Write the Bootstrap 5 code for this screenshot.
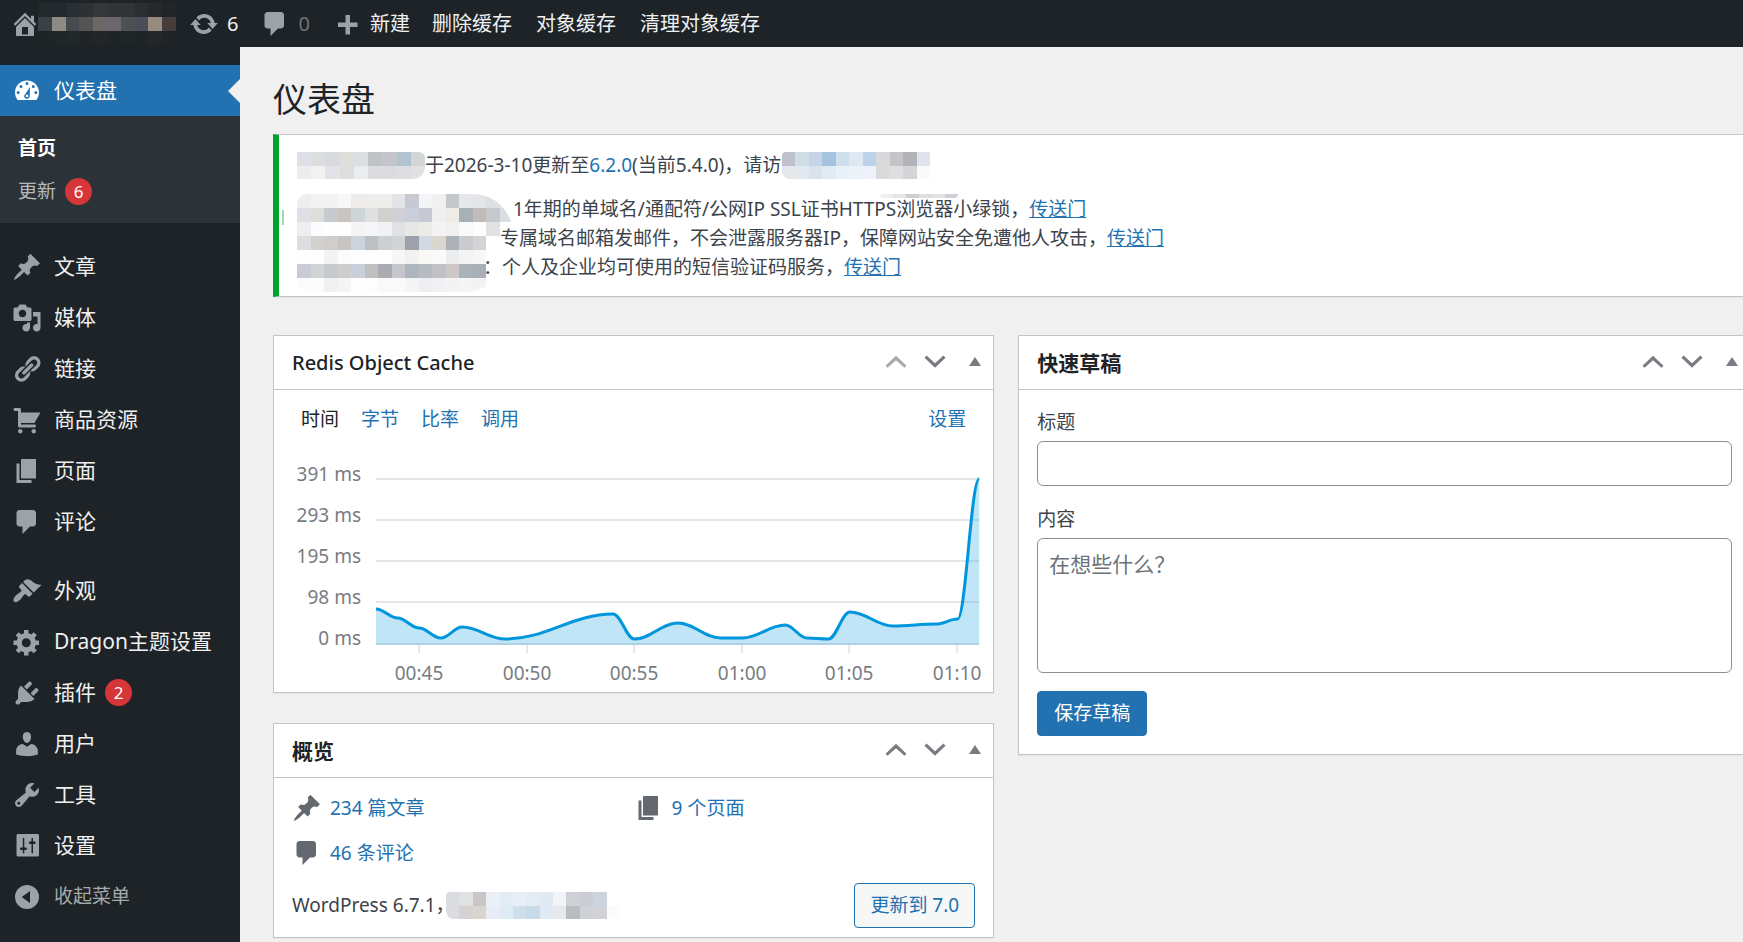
<!DOCTYPE html>
<html lang="zh-CN">
<head>
<meta charset="utf-8">
<meta name="viewport" content="width=device-width, initial-scale=1">
<title>仪表盘</title>
<link rel="stylesheet" href="https://cdn.jsdelivr.net/npm/bootstrap@5.3.0/dist/css/bootstrap.min.css">
<style>
  :root { --ink:#1d2327; --text:#3c434a; --link:#2271b1; --line:#c3c4c7; --icon:#9ca2a7; }
  body { background:#f0f0f1; color:var(--text); font:400 19px/29px "Noto Sans","Noto Sans CJK SC",sans-serif; overflow-x:hidden; }
  a { color:var(--link); }
  svg.ico { width:30px; height:30px; fill:currentColor; flex:none; display:block; }
  .mosaic { display:block; flex:none; shape-rendering:crispEdges; }

  .topbar { height:47px; background:var(--ink); padding-left:10px; font-size:20px; }
  .topbar a { color:#f0f0f1; text-decoration:none; }
  .topbar .ico { color:var(--icon); }
  .site-name { width:147px; margin-left:-2px; }
  .topbar .tool { gap:8px; margin-right:22px; }

  .side { width:240px; background:var(--ink); padding-top:18px; font-size:21px; min-height:calc(100vh - 47px); }
  .side ul { list-style:none; margin:0; padding:0; }
  .side .entry { display:flex; align-items:center; gap:12px; height:51px; padding-left:12px; color:#f0f0f1; text-decoration:none; border:0; background:none; width:100%; }
  .side .ico { color:var(--icon); }
  .side .current { background:var(--link); color:#fff; position:relative; }
  .side .current .ico { color:#fff; }
  .side .current::after { content:""; position:absolute; right:0; top:14px; border:12px solid transparent; border-left:0; border-right-color:#f0f0f1; }
  .side .submenu { background:#2c3338; padding:11px 0 10px; }
  .submenu a { display:flex; align-items:center; height:43px; padding-left:18px; gap:9px; font-size:19px; color:#b4b9be; text-decoration:none; }
  .submenu a.here { color:#fff; font-weight:600; }
  .side .part { margin-top:18px; }
  .side .fold { font-size:19px; color:#a7aaad; }
  .count { width:27px; height:27px; border-radius:14px; background:#d63638; color:#fff; font-size:17px; line-height:27px; text-align:center; }
  .entry .count { margin-left:-3px; }

  .content-area { min-width:0; padding:30px 0 0 33px; margin-right:-8px; }
  .content-area h1 { font-size:34px; line-height:44px; font-weight:400; color:var(--ink); margin:0 0 13px; }
  .notice { background:#fff; border:1px solid var(--line); border-left:6px solid #00a32a; height:163px; padding:16px 18px 0; box-shadow:0 1px 1px rgba(0,0,0,.04); margin-bottom:38px; }
  .notice p { margin:0; white-space:nowrap; }
  .promo { margin-top:15px; position:relative; }
  .promo .cover { position:absolute; left:0; top:-1px; border-radius:10px 40px 50px 12px; }
  .promo .cover-top { position:absolute; left:583px; top:-1px; border-radius:0 0 20px 20px; }
  .promo .speck { position:absolute; left:-15px; top:15px; width:2px; height:15px; background:#9fd9ae; }
  .site-cover { border-radius:0 6px 12px 0; }
  .link-cover { border-radius:4px 0 0 8px; margin-left:-18px; position:relative; }
  .in-a { padding-left:216px; } .in-b { padding-left:203px; } .in-c { padding-left:186px; }

  .boards { display:grid; grid-template-columns:minmax(0,62fr) minmax(0,63fr); gap:24px; align-items:start; }
  .boards .stack { gap:30px; }
  .board { background:#fff; border:1px solid var(--line); box-shadow:0 1px 1px rgba(0,0,0,.04); }
  .board header { height:54px; border-bottom:1px solid var(--line); padding:0 8px 0 18px; color:#787c82; }
  .board h2 { font-size:21px; line-height:30px; font-weight:600; color:var(--ink); margin:0; }
  .board h2.latin { font-size:20px; font-weight:500; }
  .board header button { border:0; background:none; padding:0; color:inherit; display:block; }
  .board header button:disabled { color:#a7aaad; }
  .board header .tools { gap:9px; padding-bottom:2px; }
  .board header .fold-btn { margin-left:6px; }
  .board header .fold-btn .ico { width:20px; }

  .tabs { padding:15px 27px 0; font-size:19px; gap:22px; height:50px; }
  .tabs a { text-decoration:none; }
  .tabs a.on { color:var(--ink); }
  .chart { display:block; width:100%; height:auto; }
  .chart text { fill:#787c82; font-size:19px; }
  .chart .end { text-anchor:end; } .chart .mid { text-anchor:middle; }

  .glance { padding:15px 18px 9px; }
  .glance a { text-decoration:none; }
  .glance .facts { display:grid; grid-template-columns:1fr 1fr; row-gap:15px; margin-bottom:15px; }
  .facts .fact { display:flex; align-items:center; gap:8px; height:30px; color:#646970; }
  .glance .version-cover { margin-left:-9px; border-radius:4px 0 0 8px; }
  .glance .btn-up { margin-left:auto; height:45px; padding:0 15px; font-size:19px; line-height:43px; color:var(--link); border:1px solid var(--link); background:#f6f7f7; border-radius:4px; }

  .draft { padding:18px; }
  .draft label { display:block; height:29px; margin-bottom:4px; }
  .draft .form-control { border:1px solid #8c8f94; border-radius:6px; font-size:21px; line-height:30px; padding:10px 11px; color:#2c3338; }
  .draft input.form-control { height:45px; margin-bottom:19px; }
  .draft textarea.form-control { height:135px; resize:none; margin-bottom:18px; }
  .draft .form-control::placeholder { color:#6d7278; }
  .draft .btn-save { height:45px; padding:0 16px; font-size:19px; line-height:43px; background:var(--link); border:1px solid var(--link); color:#fff; border-radius:4px; }
</style>
</head>
<body>
<svg class="d-none" aria-hidden="true">
  <symbol id="home" viewBox="0 0 20 20"><path d="M16 8.5l1.53 1.53-1.06 1.06L10 4.6l-6.47 6.49-1.06-1.06L10 2.5l4 4v-2h2v4zm-6-2.46l6 5.99V18H4v-5.97zM12 17v-5H8v5h4z"/></symbol>
  <symbol id="sync" viewBox="0 0 20 20"><path d="M10.2 3.28c3.53 0 6.43 2.61 6.92 6h2.08l-3.5 4-3.5-4h2.32c-.45-1.97-2.21-3.45-4.32-3.45-1.45 0-2.73.71-3.54 1.78L4.95 5.66C6.23 4.2 8.11 3.28 10.2 3.28zm-.4 13.44c-3.52 0-6.43-2.61-6.92-6H.8l3.5-4c1.17 1.33 2.33 2.67 3.5 4H5.48c.45 1.97 2.21 3.45 4.32 3.45 1.45 0 2.73-.71 3.54-1.78l1.71 1.95c-1.28 1.46-3.15 2.38-5.25 2.38z"/></symbol>
  <symbol id="comment" viewBox="0 0 20 20"><path d="M5 2h9c1.1 0 2 .9 2 2v7c0 1.1-.9 2-2 2h-2l-5 5v-5H5c-1.1 0-2-.9-2-2V4c0-1.1.9-2 2-2z"/></symbol>
  <symbol id="plus" viewBox="0 0 20 20"><path d="M17 9v3h-5v5H9v-5H4V9h5V4h3v5h5z"/></symbol>
  <symbol id="gauge" viewBox="0 0 20 20"><path fill-rule="evenodd" d="M3.76 16h12.48c1.1-1.37 1.76-3.11 1.76-5 0-4.42-3.58-8-8-8s-8 3.58-8 8c0 1.89.66 3.63 1.76 5zM9 5a1 1 0 1 1 2 0a1 1 0 1 1-2 0zM5 7a1 1 0 1 1 2 0a1 1 0 1 1-2 0zM13.2 7a1 1 0 1 1 2 0a1 1 0 1 1-2 0zM3.1 11a1 1 0 1 1 2 0a1 1 0 1 1-2 0zM14.9 11a1 1 0 1 1 2 0a1 1 0 1 1-2 0zM12 7.3l-.2 5.9c.1 1.2-.7 2-1.8 2s-2-.9-1.9-1.9c.1-.6.4-1 .8-1.3zM10 12.3a.9.9 0 1 0 .01 0z"/></symbol>
  <symbol id="pin" viewBox="0 0 20 20"><path d="M10.44 3.02l1.82-1.82 6.36 6.35-1.83 1.82c-1.05-.68-2.48-.57-3.41.36l-.75.75c-.92.93-1.04 2.35-.35 3.41l-1.83 1.82-2.41-2.41-2.8 2.79c-.42.42-3.38 2.71-3.8 2.29s1.86-3.39 2.28-3.81l2.79-2.79L4.1 9.36l1.83-1.82c1.05.69 2.48.57 3.4-.36l.75-.75c.93-.92 1.05-2.35.36-3.41z"/></symbol>
  <symbol id="media" viewBox="0 0 20 20"><path d="M13 11V4c0-.55-.45-1-1-1h-1.67L9 1H5L3.67 3H2c-.55 0-1 .45-1 1v7c0 .55.45 1 1 1h10c.55 0 1-.45 1-1zM7 4.5c1.38 0 2.5 1.12 2.5 2.5S8.38 9.5 7 9.5 4.5 8.38 4.5 7 5.62 4.5 7 4.5zM14 6h5v10.5c0 1.38-1.12 2.5-2.5 2.5S14 17.88 14 16.5s1.12-2.5 2.5-2.5c.17 0 .34.02.5.05V9h-3V6zm-4 8.05V13h2v3.5c0 1.38-1.12 2.5-2.5 2.5S7 17.88 7 16.5 8.12 14 9.5 14c.17 0 .34.02.5.05z"/></symbol>
  <symbol id="chain" viewBox="0 0 20 20"><path d="M17.74 2.76c1.68 1.69 1.68 4.41 0 6.1l-1.53 1.52c-1.12 1.12-2.7 1.47-4.14 1.09l2.62-2.61.76-.77.76-.76c.84-.84.84-2.2 0-3.04-.84-.85-2.2-.85-3.04 0l-.77.76-3.38 3.38c-.37-1.44-.02-3.02 1.1-4.14l1.52-1.53c1.69-1.68 4.42-1.68 6.1 0zM8.59 13.43l5.34-5.34c.42-.42.42-1.1 0-1.52-.44-.43-1.13-.39-1.53 0l-5.33 5.34c-.42.42-.42 1.1 0 1.52.44.43 1.13.39 1.52 0zm-.76 2.29l4.14-4.15c.38 1.44.03 3.02-1.09 4.14l-1.52 1.53c-1.69 1.68-4.41 1.68-6.1 0-1.68-1.68-1.68-4.42 0-6.1l1.53-1.52c1.12-1.12 2.7-1.47 4.14-1.1l-4.14 4.15c-.85.84-.85 2.2 0 3.05.84.84 2.2.84 3.04 0z"/></symbol>
  <symbol id="cart" viewBox="0 0 20 20"><path d="M6 13h9c.55 0 1 .45 1 1s-.45 1-1 1H5c-.55 0-1-.45-1-1V4H2c-.55 0-1-.45-1-1s.45-1 1-1h3c.55 0 1 .45 1 1v2h13l-4 7H6v1zm-.5 3c.83 0 1.5.67 1.5 1.5S6.33 19 5.5 19 4 18.33 4 17.5 4.67 16 5.5 16zm9 0c.83 0 1.5.67 1.5 1.5s-.67 1.5-1.5 1.5-1.5-.67-1.5-1.5.67-1.5 1.5-1.5z"/></symbol>
  <symbol id="pages" viewBox="0 0 20 20"><path d="M6 15V2h10v13H6zm-1 1h8v2H3V5h2v11z"/></symbol>
  <symbol id="brush" viewBox="0 0 20 20"><path d="M14.48 11.06L7.41 3.99l1.5-1.5c.5-.56 2.3-.47 3.51.32 1.21.8 1.43 1.28 2.91 2.1 1.18.64 2.45 1.26 4.45.85zm-.71.71L6.7 4.7 4.93 6.47c-.39.39-.39 1.02 0 1.41l1.06 1.06c.39.39.39 1.03 0 1.42-.6.6-1.43 1.11-2.21 1.69-.35.26-.7.53-1.01.84C1.43 14.23.4 16.08 1.4 17.07c.99 1 2.84-.03 4.18-1.36.31-.31.58-.66.85-1.02.57-.78 1.08-1.61 1.69-2.21.39-.39 1.02-.39 1.41 0l1.06 1.06c.39.39 1.02.39 1.41 0z"/></symbol>
  <symbol id="gear" viewBox="0 0 20 20"><path d="M18 12h-2.18c-.17.7-.44 1.35-.81 1.93l1.54 1.54-2.1 2.1-1.54-1.54c-.58.36-1.23.63-1.91.79V19H8v-2.18c-.68-.16-1.33-.43-1.91-.79l-1.54 1.54-2.12-2.12 1.54-1.54c-.36-.58-.63-1.23-.79-1.91H1V9.03h2.17c.16-.7.44-1.35.8-1.94L2.43 5.55l2.1-2.1 1.54 1.54c.58-.37 1.24-.64 1.93-.81V2h3v2.18c.68.16 1.33.43 1.91.79l1.54-1.54 2.12 2.12-1.54 1.54c.36.59.64 1.24.8 1.94H18V12zm-8.5 1.5c1.66 0 3-1.34 3-3s-1.34-3-3-3-3 1.34-3 3 1.34 3 3 3z"/></symbol>
  <symbol id="plug" viewBox="0 0 20 20"><path d="M13.11 4.36L9.87 7.6 8 5.73l3.24-3.24c.35-.34 1.05-.2 1.56.32.52.51.66 1.21.31 1.55zm-8 1.77l.91-1.12 9.01 9.01-1.19.84c-.71.71-2.63 1.16-3.82 1.16H6.14L4.9 17.26c-.59.59-1.54.59-2.12 0-.59-.58-.59-1.53 0-2.12l1.24-1.24v-3.88c0-1.13.4-3.19 1.09-3.89zm7.26 3.97l3.24-3.24c.34-.35 1.04-.21 1.55.31.52.51.66 1.21.31 1.55l-3.24 3.25z"/></symbol>
  <symbol id="user" viewBox="0 0 20 20"><path d="M10 9.25c-2.27 0-2.73-3.44-2.73-3.44C7 4.02 7.82 2 9.97 2c2.16 0 2.98 2.02 2.71 3.81 0 0-.41 3.44-2.68 3.44zm0 2.57L12.72 10c2.39 0 4.52 2.33 4.52 4.53v2.49s-3.65 1.13-7.24 1.13c-3.65 0-7.24-1.13-7.24-1.13v-2.49c0-2.25 1.94-4.48 4.47-4.48z"/></symbol>
  <symbol id="wrench" viewBox="0 0 20 20"><path d="M16.68 9.77c-1.34 1.34-3.3 1.67-4.95.99l-5.41 6.52c-.99.99-2.59.99-3.58 0s-.99-2.59 0-3.57l6.52-5.42c-.68-1.65-.35-3.61.99-4.95 1.28-1.28 3.12-1.62 4.72-1.06l-2.89 2.89 2.82 2.82 2.86-2.87c.53 1.58.18 3.39-1.08 4.65zM3.81 16.21c.4.39 1.04.39 1.43 0 .4-.4.4-1.04 0-1.43-.39-.4-1.03-.4-1.43 0-.39.39-.39 1.03 0 1.43z"/></symbol>
  <symbol id="sliders" viewBox="0 0 20 20"><path fill-rule="evenodd" d="M18 16V3c0-.55-.45-1-1-1H4c-.55 0-1 .45-1 1v13c0 .55.45 1 1 1h13c.55 0 1-.45 1-1zM8.2 11h.8c.55 0 1 .3 1 .8s-.45.8-1 .8h-.8v1.9c0 .28-.22.5-.5.5s-.5-.22-.5-.5v-1.9H6.300c-.55 0-1-.3-1-.8s.45-.8 1-.8h.9V5c0-.28.22-.5.5-.5s.5.22.5.5v6zm4.800-2.400h-.8c-.55 0-1-.3-1-.8s.45-.8 1-.8h.8V5c0-.28.22-.5.5-.5s.5.22.5.5v2h.8c.55 0 1 .3 1 .8s-.45.8-1 .8H14v5.900c0 .28-.22.5-.5.5s-.5-.22-.5-.5V8.600z"/></symbol>
  <symbol id="collapse" viewBox="0 0 20 20"><path fill-rule="evenodd" d="M10 2a8 8 0 1 1 0 16a8 8 0 1 1 0-16zM12 14V6l-5.500 4z"/></symbol>
  <symbol id="up" viewBox="0 0 20 20"><path d="M17 12.500l-1.400 1.400L10 8.800l-5.600 5.100L3 12.500l7-6.700z"/></symbol>
  <symbol id="down" viewBox="0 0 20 20"><path d="M17 7.100l-1.400-1.400L10 10.800 4.400 5.700 3 7.100l7 6.700z"/></symbol>
  <symbol id="tri" viewBox="0 0 20 30"><path d="M4 19h12L10 10z"/></symbol>
</svg>

<nav class="topbar d-flex align-items-center" aria-label="工具栏">
  <a href="#" class="d-flex align-items-center" aria-label="站点首页">
    <svg class="ico"><use href="#home"/></svg>
    <span class="site-name"><svg class="mosaic" width="138" height="42" data-rows="23282b 23292e 2a2f34 2d3134 35383a 323538 303438 2b2e31 25292c 202529|3a4043 8b8a83 454a4e 525456 6f6767 6c676f 4d5052 4b4e57 968b7f 463c39|1f2427 202528 22272a 1f2427 222629 1f2427 202528 1f2427 24272a 1e2428"></svg></span>
  </a>
  <a href="#" class="tool d-flex align-items-center ms-1"><svg class="ico"><use href="#sync"/></svg>6</a>
  <a href="#" class="tool d-flex align-items-center"><svg class="ico"><use href="#comment"/></svg><span class="text-secondary">0</span></a>
  <a href="#" class="tool d-flex align-items-center"><svg class="ico"><use href="#plus"/></svg>新建</a>
  <a href="#" class="me-4">删除缓存</a>
  <a href="#" class="me-4">对象缓存</a>
  <a href="#">清理对象缓存</a>
</nav>

<div class="d-flex">
  <nav class="side flex-shrink-0" aria-label="主菜单">
    <a href="#" class="entry current"><svg class="ico"><use href="#gauge"/></svg>仪表盘</a>
    <ul class="submenu">
      <li><a href="#" class="here">首页</a></li>
      <li><a href="#">更新<span class="count">6</span></a></li>
    </ul>
    <ul class="part">
      <li><a href="#" class="entry"><svg class="ico"><use href="#pin"/></svg>文章</a></li>
      <li><a href="#" class="entry"><svg class="ico"><use href="#media"/></svg>媒体</a></li>
      <li><a href="#" class="entry"><svg class="ico"><use href="#chain"/></svg>链接</a></li>
      <li><a href="#" class="entry"><svg class="ico"><use href="#cart"/></svg>商品资源</a></li>
      <li><a href="#" class="entry"><svg class="ico"><use href="#pages"/></svg>页面</a></li>
      <li><a href="#" class="entry"><svg class="ico"><use href="#comment"/></svg>评论</a></li>
    </ul>
    <ul class="part">
      <li><a href="#" class="entry"><svg class="ico"><use href="#brush"/></svg>外观</a></li>
      <li><a href="#" class="entry"><svg class="ico"><use href="#gear"/></svg>Dragon主题设置</a></li>
      <li><a href="#" class="entry"><svg class="ico"><use href="#plug"/></svg>插件<span class="count">2</span></a></li>
      <li><a href="#" class="entry"><svg class="ico"><use href="#user"/></svg>用户</a></li>
      <li><a href="#" class="entry"><svg class="ico"><use href="#wrench"/></svg>工具</a></li>
      <li><a href="#" class="entry"><svg class="ico"><use href="#sliders"/></svg>设置</a></li>
      <li><button type="button" class="entry fold"><svg class="ico"><use href="#collapse"/></svg>收起菜单</button></li>
    </ul>
  </nav>

  <main class="content-area flex-grow-1">
    <h1>仪表盘</h1>

    <section class="notice">
      <p class="d-flex align-items-center">
        <svg class="mosaic site-cover" width="128" height="27" data-rows="dfe0e6 dcdddd d9dade dfdeda dae0e2 bec3c5 c4c5ca b1c3ce d2d6d6|ebedee f2f2f0 e2e3e8 dfdcdd e8edf0 dadcdd dcdcdf dddee2 e1e1e1"></svg>
        <span>于2026-3-10更新至<a href="#" class="text-decoration-none">6.2.0</a>(当前5.4.0)，请访问</span>
        <svg class="mosaic link-cover" width="148" height="27" data-rows="bec0cb d0dde2 c5d4e6 a3c3de cfdeeb dde8f3 bcd2e9 d8d9da c6c4c6 b1b3b9 e1e4ee|e6e7ea e1e8f0 d8e3ee e1ecf2 e8f0f8 ebf2f8 eef3fa dadada dfdfe1 d4d5d8 fafafa"></svg>
      </p>
      <div class="promo">
        <p class="in-a">1年期的单域名/通配符/公网IP SSL证书HTTPS浏览器小绿锁，<a href="#">传送门</a></p>
        <p class="in-b">专属域名邮箱发邮件，不会泄露服务器IP，保障网站安全免遭他人攻击，<a href="#">传送门</a></p>
        <p class="in-c">：个人及企业均可使用的短信验证码服务，<a href="#">传送门</a></p>
        <svg class="mosaic cover" width="216" height="98" data-rows="eeeeef f2f4f3 f3f3f2 f7f9f8 eeeceb eeedec ededeb e3e4e7 c9c9d3 f4f5f6 f1f0ef c4c8ca e6e7e8 e2e5e9 dce0e3 dfe5e8|dfe0e6 dfddda c7cbcf cac5c3 cdd5d8 dfdfe0 d2d0cd d0d1d7 c9d0db c9c9d3 efeff2 efece8 a7b0b5 c2bcb9 c7c9ce d8dfe4|eeeeee fafcff fefefe fefefe f4f4f4 f5f6fa f2f2f2 dfe1e4 e8e7e8 edebe8 f3f3f4 f2f0ee f8f9fa fdfdfd e2e2e4 -|dddee2 d2d1ce d0cecc c8c4c2 cbd4dc bac0c4 ccd0d3 d1d4d3 9da1aa d1d9e2 dbd6cf adb1b8 cacbcf d4d4d4 - -|fefefe fefefe f3f3f3 fafbfd fefefe fefefe fefefe f7f7f7 f1f1f1 f9f8f5 fafafa eceeed f4f4f6 f7f7f8 - -|c9ccd6 d2d3d5 c6cacd cfcdcb cad0db c0bfbf abacb1 c6c7cd adb6be b7bcc1 c1c1c5 cdc7c8 aab3b7 a9afb6 - -|fbfafc fcfcfc f1f1f3 f4f4f4 fefefe fdfdfd f9f9fa f9f9f9 f4f5f7 efeff1 f0f1f4 f4f3f4 f4f5f5 f3f3f5 - -"></svg>
        <svg class="mosaic cover-top" width="78" height="4" data-rows="efeff0 e5e5e8 ccced2 dedede e3e2e3 cfd0d6"></svg>
        <span class="speck"></span>
      </div>
    </section>

    <div class="boards">
      <div class="stack d-grid">
        <section class="board">
          <header class="d-flex align-items-center justify-content-between">
            <h2 class="latin">Redis Object Cache</h2>
            <div class="tools d-flex align-items-center">
              <button type="button" disabled aria-label="上移"><svg class="ico"><use href="#up"/></svg></button>
              <button type="button" aria-label="下移"><svg class="ico"><use href="#down"/></svg></button>
              <button type="button" class="fold-btn" aria-label="折叠"><svg class="ico"><use href="#tri"/></svg></button>
            </div>
          </header>
          <nav class="tabs d-flex" aria-label="指标">
            <a href="#" class="on">时间</a><a href="#">字节</a><a href="#">比率</a><a href="#">调用</a><a href="#" class="ms-auto">设置</a>
          </nav>
          <svg class="chart" viewBox="0 0 719 252" role="img" aria-label="响应时间">
            <g stroke="#e6e6e6" stroke-width="2"><path d="M102 39H705M102 80H705M102 121H705M102 162H705M102 204H705"/><path d="M145 205v8M253 205v8M360 205v8M468 205v8M575 205v8M683 205v8"/></g>
            <path id="area" fill="#0096dd" fill-opacity=".25"/>
            <path id="curve" fill="none" stroke="#0096dd" stroke-width="3"/>
            <g class="end"><text x="87" y="41">391 ms</text><text x="87" y="82">293 ms</text><text x="87" y="123">195 ms</text><text x="87" y="164">98 ms</text><text x="87" y="205">0 ms</text></g>
            <g class="mid"><text x="145" y="240">00:45</text><text x="253" y="240">00:50</text><text x="360" y="240">00:55</text><text x="468" y="240">01:00</text><text x="575" y="240">01:05</text><text x="683" y="240">01:10</text></g>
          </svg>
        </section>

        <section class="board">
          <header class="d-flex align-items-center justify-content-between">
            <h2>概览</h2>
            <div class="tools d-flex align-items-center">
              <button type="button" aria-label="上移"><svg class="ico"><use href="#up"/></svg></button>
              <button type="button" aria-label="下移"><svg class="ico"><use href="#down"/></svg></button>
              <button type="button" class="fold-btn" aria-label="折叠"><svg class="ico"><use href="#tri"/></svg></button>
            </div>
          </header>
          <div class="glance">
            <div class="facts">
              <div class="fact"><svg class="ico"><use href="#pin"/></svg><a href="#">234 篇文章</a></div>
              <div class="fact"><svg class="ico"><use href="#pages"/></svg><a href="#">9 个页面</a></div>
              <div class="fact"><svg class="ico"><use href="#comment"/></svg><a href="#">46 条评论</a></div>
            </div>
            <div class="d-flex align-items-center">
              <span>WordPress 6.7.1，</span>
              <svg class="mosaic version-cover" width="174" height="27" data-rows="dadce2 e0e2e1 cac6c5 ebeff6 e2ecf4 e8eef6 e3ebf3 dfeaf3 f0f5f8 ced0d5 cccdd2 ccd5dd -|dcdde1 d4d3d2 d9d5cf e8edf5 deebf4 d0deea c6daea dfeaf4 e7e8ed b9bcc1 d0d1d7 d2d2d6 fafcfc"></svg>
              <button type="button" class="btn-up">更新到 7.0</button>
            </div>
          </div>
        </section>
      </div>

      <section class="board">
        <header class="d-flex align-items-center justify-content-between">
          <h2>快速草稿</h2>
          <div class="tools d-flex align-items-center">
            <button type="button" aria-label="上移"><svg class="ico"><use href="#up"/></svg></button>
            <button type="button" aria-label="下移"><svg class="ico"><use href="#down"/></svg></button>
            <button type="button" class="fold-btn" aria-label="折叠"><svg class="ico"><use href="#tri"/></svg></button>
          </div>
        </header>
        <form class="draft">
          <label for="title">标题</label>
          <input id="title" type="text" class="form-control">
          <label for="body">内容</label>
          <textarea id="body" class="form-control" placeholder="在想些什么？"></textarea>
          <button type="button" class="btn-save">保存草稿</button>
        </form>
      </section>
    </div>
  </main>
</div>

<script src="https://cdn.jsdelivr.net/npm/bootstrap@5.3.0/dist/js/bootstrap.bundle.min.js"></script>
<script>
  // Colour blocks: rows are separated by "|", "-" leaves a cell empty.
  document.querySelectorAll('.mosaic').forEach(svg => {
    const rows = svg.dataset.rows.split('|').map(r => r.split(' '));
    svg.setAttribute('viewBox', `0 0 ${rows[0].length} ${rows.length}`);
    svg.setAttribute('preserveAspectRatio', 'none');
    svg.innerHTML = rows.map((r, y) => r.map((c, x) => c === '-' ? '' :
      `<rect x="${x}" y="${y}" width="1" height="1" fill="#${c}"/>`).join('')).join('');
  });
  // Response times: minutes after 00:43 and height on the chart.
  const pts = [[0,169],[1,178],[2,188],[3,198],[4,187],[6,199],[11,174],[12,199],[14,183],[16,198],[17,198],[19,185],[20,198],[21,199],[22,172],[24,186],[26,184],[27,179],[28,39]]
    .map(([m, y]) => [102 + m * 603 / 28, y]);
  let d = `M${pts[0]}`;
  for (let i = 1; i < pts.length; i++) {
    const [x0, y0] = pts[i - 1], [x1, y1] = pts[i], k = (x1 - x0) * .38;
    d += `C${x0 + k} ${y0} ${x1 - k} ${y1} ${x1} ${y1}`;
  }
  document.getElementById('curve').setAttribute('d', d);
  document.getElementById('area').setAttribute('d', d + 'V205H102Z');
</script>
</body>
</html>
